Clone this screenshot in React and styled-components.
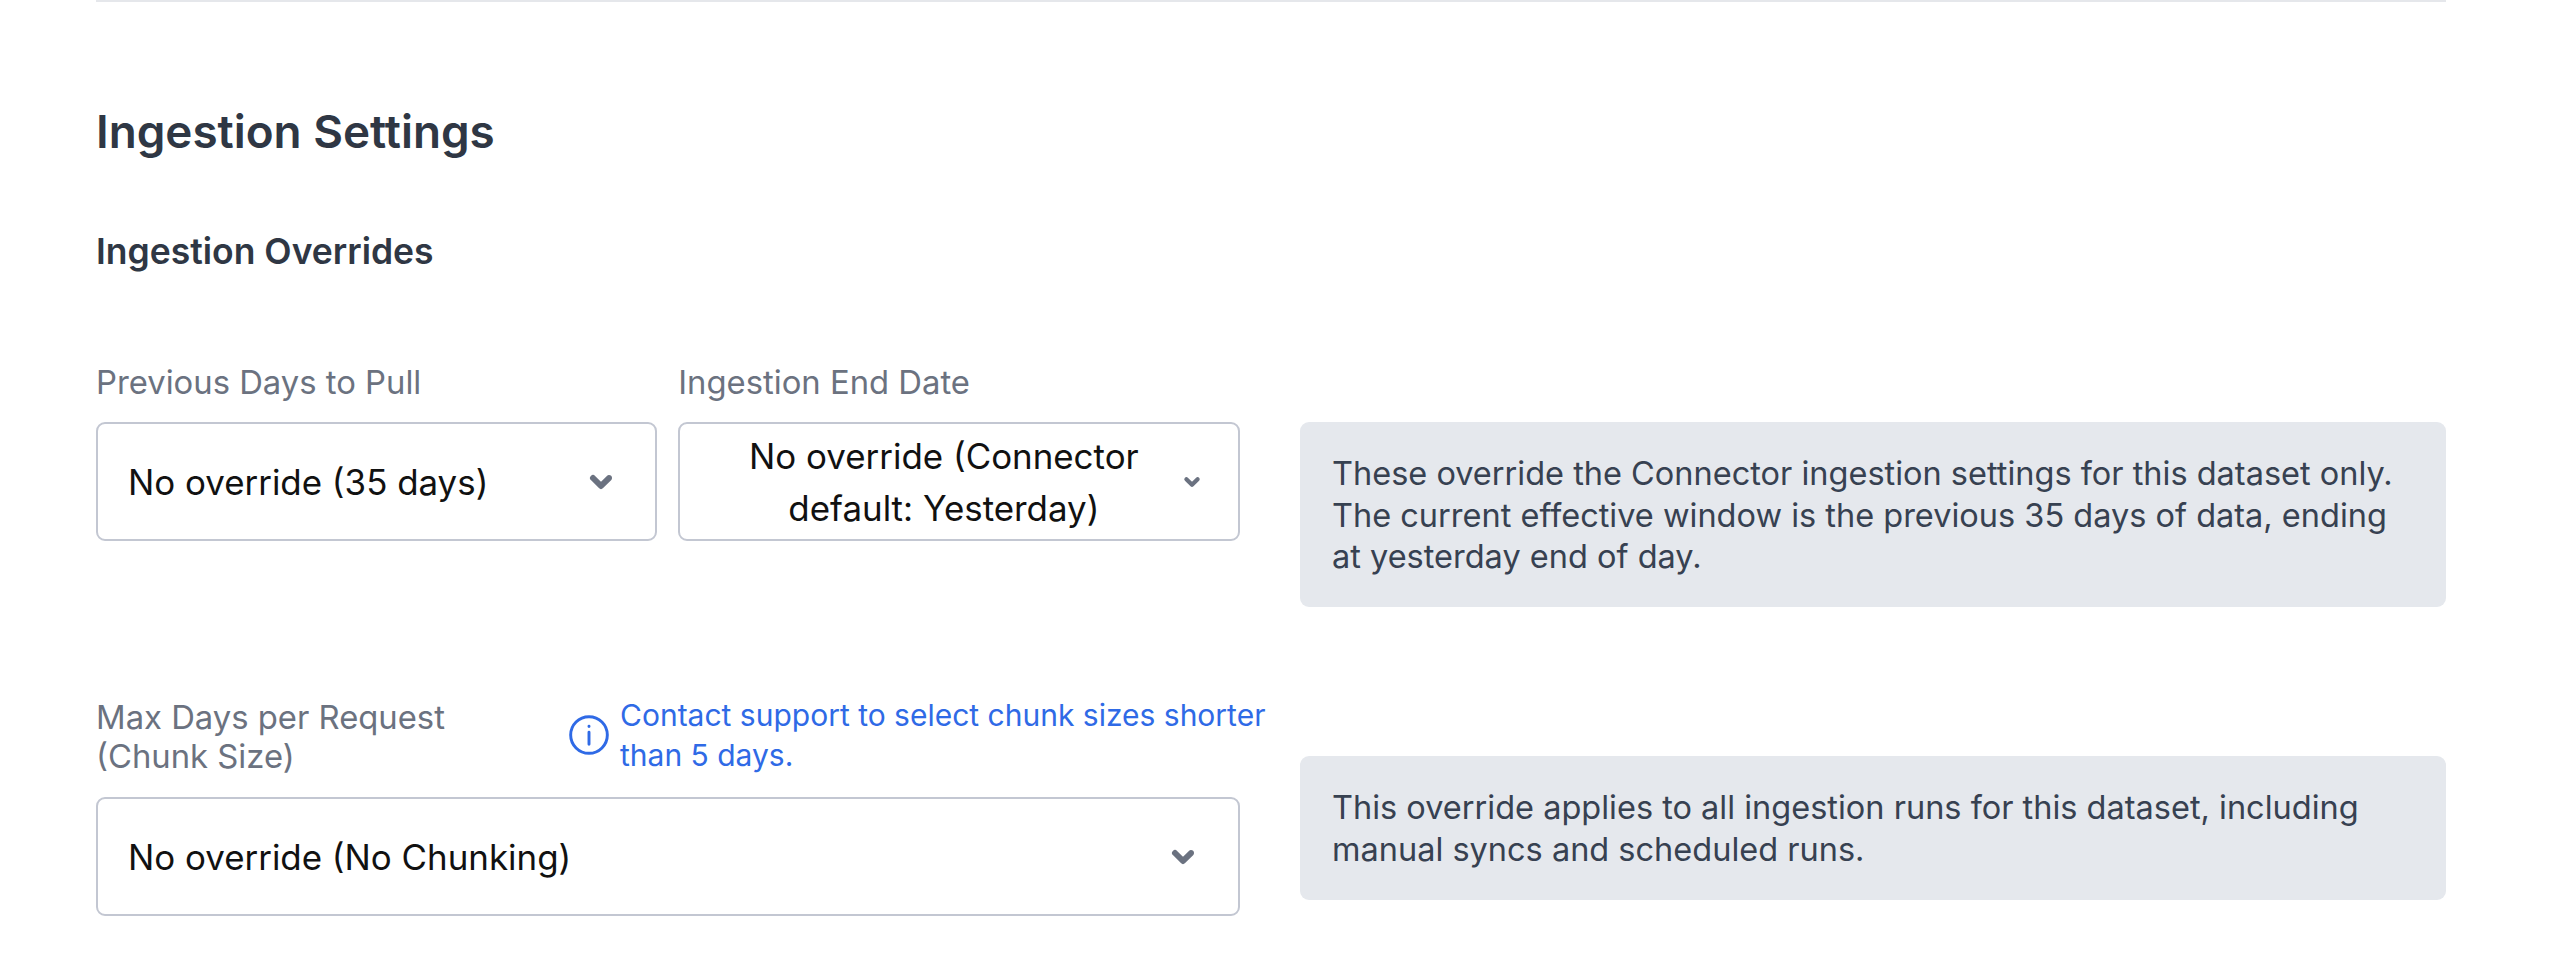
import styled, { createGlobalStyle } from "styled-components";

const GlobalStyle = createGlobalStyle`
  * {
    box-sizing: border-box;
  }
  body {
    margin: 0;
    background: #fff;
    font-family: Inter, "Liberation Sans", sans-serif;
  }
`;

const Page = styled.main`
  padding: 0 112px 0 96px;
`;

const Divider = styled.hr`
  height: 2px;
  margin: 0;
  border: 0;
  background: #e5e7eb;
`;

const Title = styled.h2`
  margin: 97px 0 0;
  font-size: 45.8px;
  line-height: 66px;
  font-weight: 600;
  color: #2f3744;
`;

const Subtitle = styled.h3`
  margin: 61px 0 0;
  font-size: 35.5px;
  line-height: 52px;
  font-weight: 600;
  color: #2f3744;
`;

const Row = styled.section`
  display: grid;
  grid-template-columns: 1143.5px 1fr;
  column-gap: 60.5px;
  align-items: start;
  margin-top: ${(p) => p.$top}px;
`;

const Fields = styled.div`
  display: flex;
  gap: 21px;
`;

const Field = styled.div`
  flex: 1;
`;

const Label = styled.label`
  display: block;
  font-size: 32.8px;
  line-height: 39px;
  color: #6b7280;
  margin-bottom: 20px;
`;

const Select = styled.div`
  display: flex;
  align-items: center;
  height: 119px;
  padding: 0 ${(p) => p.$right}px 0 30px;
  border: 2px solid #c3c7d2;
  border-radius: 9px;
  background: #fff;
  color: #111;
  font-size: 34.9px;
  line-height: 52px;
`;

const SelectText = styled.span`
  flex: 1;
  text-align: ${(p) => (p.$center ? "center" : "left")};
`;

const Chevron = styled.svg`
  flex: none;
  width: ${(p) => p.$size}px;
  height: ${(p) => p.$size}px;
  fill: #6b7280;
  stroke: #6b7280;
  stroke-width: 1;
`;

const InfoBox = styled.aside`
  margin-top: ${(p) => p.$top}px;
  padding: 31px 32px 29.5px;
  border-radius: 9px;
  background: #e5e8ed;
  color: #374151;
  font-size: 32.5px;
  line-height: 41.6px;
`;

const LabelRow = styled.div`
  display: flex;
  align-items: center;
  margin-bottom: 19px;
`;

const WrappedLabel = styled(Label)`
  flex: none;
  width: 471px;
  margin: 0;
`;

const Notice = styled.div`
  display: flex;
  align-items: center;
  gap: 9px;
  margin-bottom: 3px;
  color: #2f6ae6;
  font-size: 30px;
  line-height: 40px;
  white-space: nowrap;
`;

const NoticeIcon = styled.svg`
  flex: none;
  width: 44px;
  height: 44px;
  fill: none;
  stroke: #2f6ae6;
  stroke-width: 1.6;
  stroke-linecap: round;
  stroke-linejoin: round;
`;

function ChevronDown({ size }) {
  return (
    <Chevron $size={size} viewBox="0 0 20 20">
      <path d="M5.293 7.293a1 1 0 011.414 0L10 10.586l3.293-3.293a1 1 0 111.414 1.414l-4 4a1 1 0 01-1.414 0l-4-4a1 1 0 010-1.414z" />
    </Chevron>
  );
}

export default function App() {
  return (
    <Page>
      <GlobalStyle />
      <Divider />
      <Title>Ingestion Settings</Title>
      <Subtitle>Ingestion Overrides</Subtitle>

      <Row $top={85}>
        <Fields>
          <Field>
            <Label>Previous Days to Pull</Label>
            <Select $right={34}>
              <SelectText>No override (35 days)</SelectText>
              <ChevronDown size={40} />
            </Select>
          </Field>
          <Field>
            <Label>Ingestion End Date</Label>
            <Select $right={32}>
              <SelectText $center>
                No override (Connector
                <br />
                default: Yesterday)
              </SelectText>
              <ChevronDown size={28} />
            </Select>
          </Field>
        </Fields>
        <InfoBox $top={59}>
          These override the Connector ingestion settings for this dataset only. The current
          effective window is the previous 35 days of data, ending at yesterday end of day.
        </InfoBox>
      </Row>

      <Row $top={88}>
        <div>
          <LabelRow>
            <WrappedLabel>
              Max Days per Request
              <br />
              (Chunk Size)
            </WrappedLabel>
            <Notice>
              <NoticeIcon viewBox="0 0 24 24">
                <circle cx="12" cy="12" r="10" />
                <path d="M12 10.5v6.5M12 7.2v.2" />
              </NoticeIcon>
              <span>
                Contact support to select chunk sizes shorter
                <br />
                than 5 days.
              </span>
            </Notice>
          </LabelRow>
          <Select $right={35}>
            <SelectText>No override (No Chunking)</SelectText>
            <ChevronDown size={40} />
          </Select>
        </div>
        <InfoBox $top={61}>
          This override applies to all ingestion runs for this dataset, including manual syncs and
          scheduled runs.
        </InfoBox>
      </Row>
    </Page>
  );
}
